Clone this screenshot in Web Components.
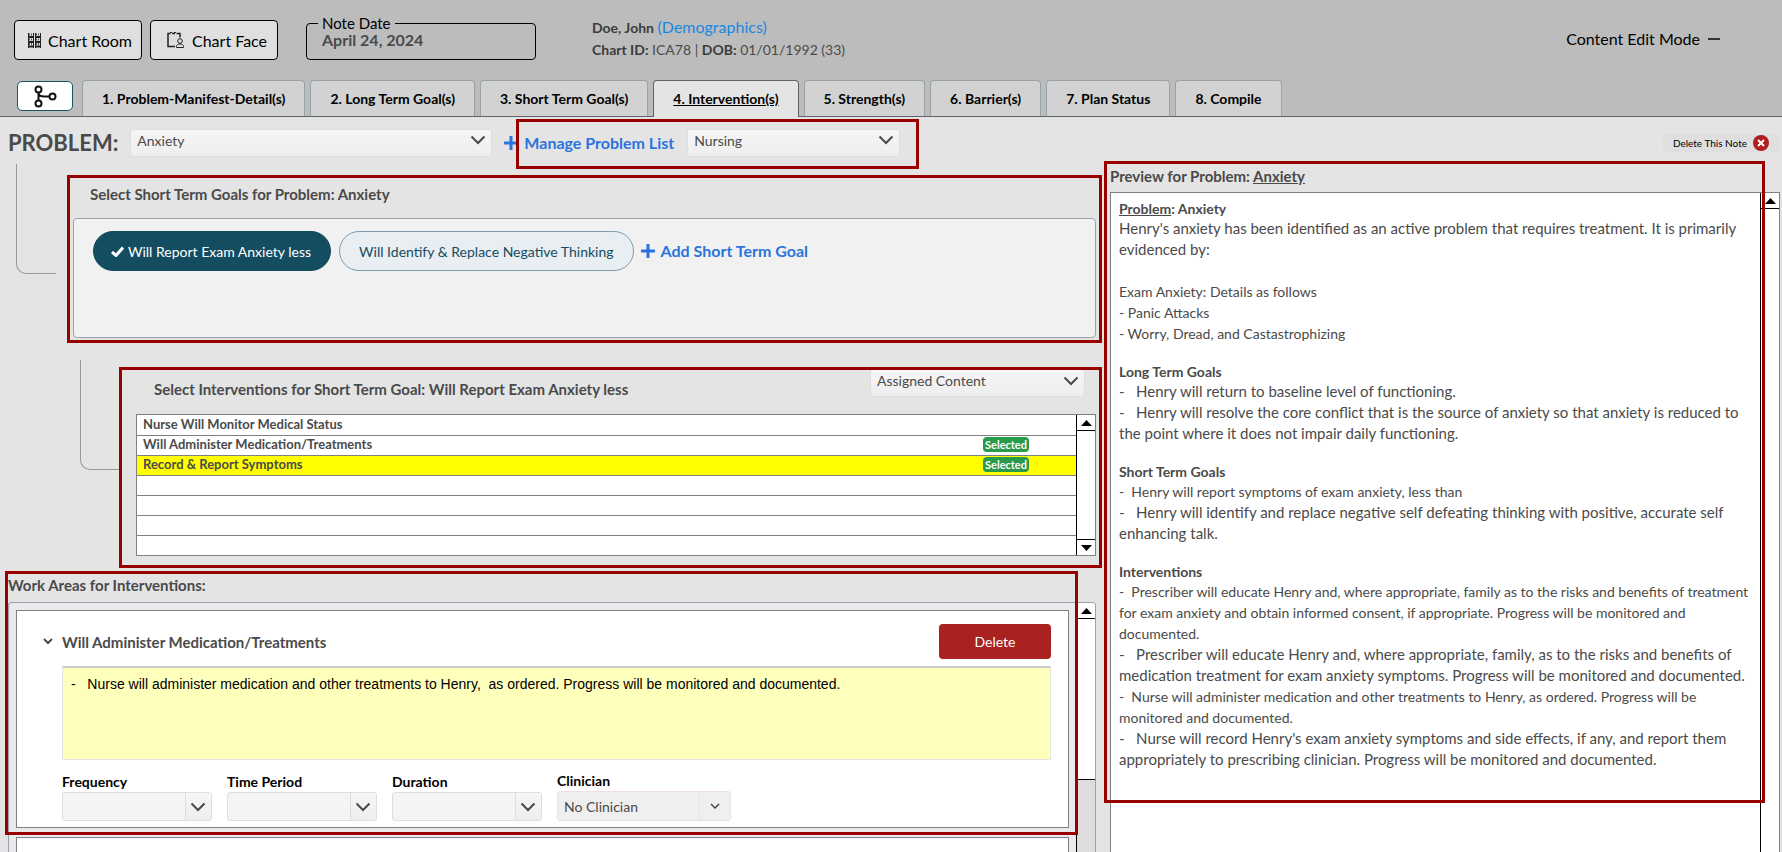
<!DOCTYPE html>
<html lang="en">
<head>
<meta charset="utf-8">
<title>Treatment Plan - Interventions</title>
<style>
    body {
        margin: 0;
        font-family: Lato, "Open Sans", sans-serif;
        font-size: 15px;
        color: #4a4a4a;
        background: #e4e4e4;
    }
</style>
</head>
<body>
<plan-page></plan-page>

<script>
const TABS = [
    "1. Problem-Manifest-Detail(s)",
    "2. Long Term Goal(s)",
    "3. Short Term Goal(s)",
    "4. Intervention(s)",
    "5. Strength(s)",
    "6. Barrier(s)",
    "7. Plan Status",
    "8. Compile",
];

const INTERVENTIONS = [
    { name: "Nurse Will Monitor Medical Status" },
    { name: "Will Administer Medication/Treatments", selected: true },
    { name: "Record & Report Symptoms", selected: true, current: true },
    {}, {}, {}, {},
];

const BASE = `
    *, *::before, *::after { box-sizing: border-box; }
    button, select, textarea { font: inherit; color: inherit; margin: 0; }
    h1, h2, h3, p { margin: 0; }
`;

function define(name, render) {
    customElements.define(name, class extends HTMLElement {
        connectedCallback() {
            if (this.shadowRoot) return;
            const shadow = this.attachShadow({ mode: "open" });
            shadow.innerHTML = render(this);
        }
    });
}

// red frame drawn over whatever it wraps
define("mark-frame", () => `<style>
    ${BASE}
    :host { display: block; position: relative; }
    .frame {
        position: absolute;
        inset: var(--frame-inset, 0);
        border: 3px solid #990000;
        pointer-events: none;
        z-index: 2;
    }
</style>
<slot></slot><div class="frame"></div>`);

define("select-field", (el) => {
    const label = el.getAttribute("label");
    const hidden = el.hasAttribute("bare");
    const value = el.getAttribute("value") || "";
    return `<style>
        ${BASE}
        :host { display: block; font-size: 14px; }
        label { display: block; height: 20px; line-height: 20px; font-weight: bold; color: #000; }
        .box {
            display: grid;
            grid-template-columns: 1fr 26px;
            height: 28px;
            border: 1px solid #dedede;
            border-radius: 3px;
            background: linear-gradient(#f6f6f6, #eeeeee);
        }
        select {
            grid-area: 1 / 1 / 2 / 3;
            appearance: none;
            border: 0;
            padding: 0 30px 0 6px;
            background: none;
            width: 100%;
            min-width: 0;
        }
        svg {
            grid-area: 1 / 2;
            place-self: center;
            pointer-events: none;
            fill: none;
            stroke: #4a4a4a;
            stroke-width: 2;
        }
        :host([split]) .box { height: 29px; background: #f4f4f4; }
        :host([split]) .line {
            grid-area: 1 / 2;
            border-left: 1px solid #dedede;
            background: linear-gradient(#f6f6f6, #eeeeee);
        }
        :host([off]) .box { height: 30px; background: #efefef; border-color: #f0dfdf; grid-template-columns: 1fr 31px; }
        :host([off]) .line { background: none; border-color: #f0dfdf; }
    </style>
    ${hidden ? "" : `<label for="s">${label}</label>`}
    <div class="box">
        <span class="line"></span>
        <select id="s"${hidden ? ` aria-label="${label}"` : ""}><option>${value}</option></select>
        ${el.hasAttribute("off")
            ? `<svg width="10" height="6" viewBox="0 0 10 6"><path style="stroke-width:1.5" d="M1 1l4 4 4-4"/></svg>`
            : `<svg width="16" height="10" viewBox="0 0 16 10"><path d="M1.500 1.500L8 8l6.500-6.500"/></svg>`}
    </div>`;
});

define("scroll-rail", () => `<style>
    ${BASE}
    :host {
        display: flex;
        flex-direction: column;
        flex: none;
        box-sizing: border-box;
        width: 19px;
        border-left: 1px solid #000;
        background: #ddd;
    }
    span { display: grid; place-items: center; height: 16px; background: #fff; flex: none; }
    .up { border-bottom: 1px solid #000; }
    .down { border-top: 1px solid #000; }
    .thumb { flex: 1; background: #fff; }
    :host([partial]) .thumb { flex: none; height: 161px; border-bottom: 1px solid #000; }
    :host([partial]) .down { display: none; }
    :host([endless]) .down { display: none; }
    svg { fill: #000; }
</style>
<span class="up"><svg width="11" height="6"><path d="M5.500 0L11 6H0z"/></svg></span>
<div class="thumb"></div>
<span class="down"><svg width="11" height="6"><path d="M0 0h11L5.500 6z"/></svg></span>`);

define("add-link", () => `<style>
    ${BASE}
    :host { display: inline-flex; }
    a {
        display: inline-flex;
        align-items: center;
        gap: 6px;
        color: #2b74dd;
        font-size: 16px;
        line-height: 20px;
        font-weight: bold;
        text-decoration: none;
        white-space: nowrap;
    }
    svg { fill: #2b74dd; flex: none; }
</style>
<a href="#"><svg width="14" height="14"><path d="M5.500 0h3v5.500H14v3H8.500V14h-3V8.500H0v-3h5.500z"/></svg><slot></slot></a>`);

define("goal-chip", (el) => `<style>
    ${BASE}
    :host { display: block; font-size: 14px; }
    button {
        display: flex;
        align-items: center;
        gap: 4px;
        height: 40px;
        padding: 0 19px;
        border: 1px solid #7c9eae;
        border-radius: 20px;
        background: #e9eef2;
        color: #144c60;
        white-space: nowrap;
    }
    :host([picked]) button { background: #144c60; border-color: #144c60; color: #fff; padding: 0 19px 0 17px; }
</style>
<button type="button" aria-pressed="${el.hasAttribute("picked")}">
    ${el.hasAttribute("picked") ? `<svg width="13" height="11" viewBox="0 0 13 11"><path d="M1 6l4 3.500L12 1.500" fill="none" stroke="#fff" stroke-width="3"/></svg>` : ""}
    <slot></slot>
</button>`);

define("app-header", () => `<style>
    ${BASE}
    :host { display: block; height: 80px; background: #bcbcbc; }
    .bar { display: flex; align-items: flex-start; padding: 20px 62px 0 14px; }
    .nav {
        display: flex;
        align-items: center;
        gap: 7px;
        width: 128px;
        height: 40px;
        margin-right: 8px;
        padding: 0 0 0 13px;
        border: 1px solid #000;
        border-radius: 4px;
        background: #dfdfdf;
        color: #000;
        font-size: 16px;
        white-space: nowrap;
    }
    .face { padding-left: 16px; }
    fieldset {
        width: 230px;
        height: 46px;
        margin: -6px 56px 0 20px;
        padding: 0 15px;
        border: 1px solid #000;
        border-radius: 4px;
    }
    legend { padding: 0 4px; margin-left: -4px; font-size: 15px; line-height: 18px; color: #000; }
    fieldset b { display: block; font-size: 16px; line-height: 16px; }
    .who { font-size: 14px; line-height: 22px; margin-top: -4px; white-space: nowrap; }
    .who b { color: #3c3c3c; }
    .who a { color: #1a87e0; font-size: 16px; text-decoration: none; }
    .mode {
        display: flex;
        align-items: center;
        gap: 8px;
        margin-left: auto;
        padding: 0;
        border: 0;
        background: none;
        height: 37px;
        color: #000;
        font-size: 16px;
        white-space: nowrap;
    }
    .mode i { width: 12px; height: 2px; background: #333; }
</style>
<header class="bar">
    <button class="nav" type="button">
        <svg width="13" height="15" viewBox="0 0 13 15" fill="none" stroke="#222">
            <path d="M.5 0v15M5.500 0v15M7.500 0v15M12.500 0v15"/>
            <path stroke-width="2" d="M1 4h4M1 9h4M1 13.500h4M8 4h4M8 9h4M8 13.500h4"/>
            <path stroke="#555" stroke-dasharray="1 1" stroke-width="2" d="M1 1.500h4M1 6.500h4M1 11h4M8 1.500h4M8 6.500h4M8 11h4"/>
        </svg>
        Chart Room
    </button>
    <button class="nav face" type="button">
        <svg width="18" height="17" viewBox="0 0 18 17" fill="none" stroke="#222">
            <path stroke-width="1.500" d="M8 14.500H1V1.500h2.500M5 1.500h3M9.500 1.500H13v4"/>
            <path d="M3 .5h2M7 .5h2"/>
            <circle cx="13" cy="9" r="2.300"/>
            <path d="M9.500 15.500v-1c0-1.500 1.500-2.500 3.500-2.500s3.500 1 3.500 2.500v1z"/>
        </svg>
        Chart Face
    </button>
    <fieldset><legend>Note Date</legend><b>April 24, 2024</b></fieldset>
    <div class="who">
        <div><b>Doe, John</b> <a href="#">(Demographics)</a></div>
        <div><b>Chart ID:</b> ICA78 | <b>DOB:</b> 01/01/1992 (33)</div>
    </div>
    <button class="mode" type="button">Content Edit Mode <i></i></button>
</header>`);

define("step-tabs", () => `<style>
    ${BASE}
    :host { display: block; font-size: 14px; background: #bcbcbc; }
    nav {
        display: flex;
        gap: 5px;
        height: 37px;
        padding-left: 17px;
        border-bottom: 1px solid #5e6468;
    }
    .tree {
        width: 56px;
        height: 30px;
        margin: 1px 4px 0 0;
        padding: 0;
        border: 1px solid #1c5266;
        border-radius: 5px;
        background: #fff;
        display: grid;
        place-items: center;
    }
    a {
        height: 36px;
        padding: 0 19px;
        line-height: 36px;
        border: 1px solid #98a2a9;
        border-bottom: 0;
        border-radius: 4px 4px 0 0;
        background: #d2d2d2;
        color: #000;
        font-weight: bold;
        text-decoration: none;
        white-space: nowrap;
    }
    a[aria-current] {
        height: 37px;
        border-color: #5e6468;
        background: #e4e4e4;
        text-decoration: underline;
    }
</style>
<nav>
    <button class="tree" type="button" aria-label="Plan tree">
        <svg width="23" height="23" viewBox="0 0 23 23" fill="none" stroke="#111" stroke-width="2"><circle cx="4.500" cy="4.500" r="3"/><circle cx="4.500" cy="18.500" r="3"/><circle cx="18.500" cy="11.500" r="3"/><path d="M4.500 7.500v8M4.500 8c0 2.500 3 3.500 6 3.500h5"/></svg>
    </button>
    ${TABS.map((tab, i) => `<a href="#"${i === 3 ? ` aria-current="page"` : ""}>${tab}</a>`).join("")}
</nav>`);

define("problem-bar", () => `<style>
    ${BASE}
    :host { display: flex; align-items: center; height: 51px; padding: 0 2px 0 8px; }
    h1 { font-size: 22px; line-height: 30px; margin-right: 12px; }
    .problem { width: 362px; margin-right: 12px; }
    .list { --frame-inset: -10px -19px -12px 12px; }
    .role { width: 213px; margin-left: 13px; }
    .del {
        display: flex;
        align-items: center;
        gap: 6px;
        height: 18px;
        margin-left: auto;
        padding: 0 11px 0 10px;
        border: 0;
        border-radius: 4px;
        background: #dfdfdf;
        color: #000;
        font-size: 10px;
        white-space: nowrap;
    }
    .tools { display: flex; align-items: center; }
</style>
<h1>PROBLEM:</h1>
<select-field class="problem" bare label="Problem" value="Anxiety"></select-field>
<mark-frame class="list">
    <div class="tools">
        <add-link>Manage Problem List</add-link>
        <select-field class="role" bare label="Role" value="Nursing"></select-field>
    </div>
</mark-frame>
<button class="del" type="button">Delete This Note
    <svg width="16" height="16" viewBox="0 0 16 16"><circle cx="8" cy="8" r="8" fill="#b01e1e"/><path d="M5 5l6 6M11 5l-6 6" stroke="#fff" stroke-width="2"/></svg>
</button>`);

define("goal-picker", () => `<style>
    ${BASE}
    :host { display: block; }
    h2 { padding-left: 17px; font-size: 15px; line-height: 20px; }
    .panel {
        display: flex;
        align-items: flex-start;
        gap: 8px;
        height: 120px;
        margin-top: 14px;
        padding: 12px 19px;
        border: 1px solid #98a2ab;
        border-radius: 4px;
        background: #f1f1f1;
    }
    add-link { margin: 10px 0 0 -1px; }
</style>
<h2>Select Short Term Goals for Problem: Anxiety</h2>
<div class="panel">
    <goal-chip picked>Will Report Exam Anxiety less</goal-chip>
    <goal-chip>Will Identify &amp; Replace Negative Thinking</goal-chip>
    <add-link>Add Short Term Goal</add-link>
</div>`);

define("intervention-list", () => `<style>
    ${BASE}
    :host { display: block; }
    .top { display: flex; align-items: flex-start; justify-content: space-between; padding: 0 11px 0 18px; height: 45px; }
    h2 { font-size: 15px; line-height: 40px; }
    select-field { width: 215px; }
    .grid { display: flex; border: 1px solid #808080; background: #fff; }
    table { flex: 1; border-collapse: collapse; font-size: 13px; font-weight: bold; }
    td { height: 20px; padding: 0 0 1px; line-height: 17px; border-bottom: 1px solid #808080; }
    td:first-child { padding-left: 6px; }
    td:last-child { width: 93px; }
    tr:last-child td { border-bottom: 0; }
    .current { background: #ffff00; }
    .badge {
        display: block;
        width: 46px;
        height: 15px;
        border-radius: 4px;
        background: #279a4b;
        color: #fff;
        font-size: 11px;
        line-height: 15px;
        text-align: center;
    }
</style>
<div class="top">
    <h2>Select Interventions for Short Term Goal: Will Report Exam Anxiety less</h2>
    <select-field bare label="Content" value="Assigned Content"></select-field>
</div>
<div class="grid">
    <table>
        ${INTERVENTIONS.map((row) => `<tr${row.current ? ` class="current"` : ""}>
            <td>${row.name ? row.name.replace("&", "&amp;") : ""}</td>
            <td>${row.selected ? `<span class="badge">Selected</span>` : ""}</td>
        </tr>`).join("")}
    </table>
    <scroll-rail></scroll-rail>
</div>`);

define("work-card", () => `<style>
    ${BASE}
    :host { display: block; padding: 13px 17px 6px 25px; border: 1px solid #808080; background: #fff; }
    .head { display: flex; align-items: center; height: 35px; gap: 8px; }
    h3 { font-size: 15px; line-height: 20px; flex: 1; }
    .del { width: 112px; height: 35px; border: 0; border-radius: 4px; background: #a9221f; color: #fff; font-size: 14px; }
    .body { margin-left: 20px; }
    textarea {
        display: block;
        width: 100%;
        height: 94px;
        margin: 7px 0 11px;
        padding: 6px 8px;
        border: 1px solid #e4e4e4;
        border-top: 2px solid #ccc;
        background: #ffffbc;
        color: #000;
        font: 14px/20px "Liberation Sans", Arial, sans-serif;
        resize: none;
    }
    .fields { display: flex; align-items: flex-end; gap: 15px; }
    select-field { width: 150px; }
    select-field[off] { width: 174px; }
    .toggle { display: flex; width: 12px; height: 12px; padding: 0; border: 0; background: none; align-items: center; justify-content: center; }
</style>
<div class="head">
    <button class="toggle" type="button" aria-label="Collapse"><svg width="10" height="7" viewBox="0 0 10 7"><path d="M1 1l4 4 4-4" fill="none" stroke="#4a4a4a" stroke-width="2"/></svg></button>
    <h3>Will Administer Medication/Treatments</h3>
    <button class="del" type="button">Delete</button>
</div>
<div class="body">
    <textarea aria-label="Intervention text">-   Nurse will administer medication and other treatments to Henry,  as ordered. Progress will be monitored and documented.</textarea>
    <div class="fields">
        <select-field split label="Frequency"></select-field>
        <select-field split label="Time Period"></select-field>
        <select-field split label="Duration"></select-field>
        <select-field split off label="Clinician" value="No Clinician"></select-field>
    </div>
</div>`);

define("work-areas", () => `<style>
    ${BASE}
    :host { display: flex; flex-direction: column; flex: 1; min-height: 0; }
    h2 { font-size: 15px; line-height: 20px; margin-bottom: 7px; }
    .panel {
        display: flex;
        flex: 1;
        min-height: 0;
        border: 1px solid #98a2ab;
        border-bottom: 0;
        border-radius: 4px 4px 0 0;
        background: #ece9ec;
        overflow: hidden;
    }
    .cards { flex: 1; padding: 7px 7px 0 7px; }
    .next { height: 60px; margin-top: 9px; border: 1px solid #808080; background: #fff; }
</style>
<h2>Work Areas for Interventions:</h2>
<div class="panel">
    <div class="cards">
        <work-card></work-card>
        <div class="next"></div>
    </div>
    <scroll-rail partial></scroll-rail>
</div>`);

define("note-preview", () => `<style>
    ${BASE}
    :host { display: flex; flex-direction: column; min-height: 0; }
    h2 { font-size: 15px; line-height: 17px; margin-bottom: 7px; }
    .pane {
        display: flex;
        flex: 1;
        min-height: 0;
        overflow: hidden;
        border: 1px solid #808080;
        border-bottom: 0;
        background: #fff;
    }
    .text { flex: 1; padding: 6px 4px 6px 8px; font-size: 14px; line-height: 21px; }
    h3 { font-size: 14px; line-height: 19px; }
    p + h3 { margin-top: 18px; }
    p { white-space: pre-wrap; }
    .wide { font-size: 15px; }
    .gap { margin-top: 21px; }
</style>
<h2>Preview for Problem: <u>Anxiety</u></h2>
<div class="pane">
    <div class="text">
        <h3><u>Problem</u>: Anxiety</h3>
        <p class="wide">Henry's anxiety has been identified as an active problem that requires treatment. It is primarily evidenced by:</p>
        <p class="gap">Exam Anxiety: Details as follows</p>
        <p>- Panic Attacks</p>
        <p>- Worry, Dread, and Castastrophizing</p>
        <h3>Long Term Goals</h3>
        <p class="wide">-   Henry will return to baseline level of functioning.</p>
        <p class="wide">-   Henry will resolve the core conflict that is the source of anxiety so that anxiety is reduced to the point where it does not impair daily functioning.</p>
        <h3>Short Term Goals</h3>
        <p>-  Henry will report symptoms of exam anxiety, less than</p>
        <p class="wide">-   Henry will identify and replace negative self defeating thinking with positive, accurate self enhancing talk.</p>
        <h3>Interventions</h3>
        <p>-  Prescriber will educate Henry and, where appropriate, family as to the risks and benefits of treatment for exam anxiety and obtain informed consent, if appropriate. Progress will be monitored and documented.</p>
        <p class="wide">-   Prescriber will educate Henry and, where appropriate, family, as to the risks and benefits of medication treatment for exam anxiety symptoms. Progress will be monitored and documented.</p>
        <p>-  Nurse will administer medication and other treatments to Henry, as ordered. Progress will be monitored and documented.</p>
        <p class="wide">-   Nurse will record Henry's exam anxiety symptoms and side effects, if any, and report them appropriately to prescribing clinician. Progress will be monitored and documented.</p>
    </div>
    <scroll-rail endless></scroll-rail>
</div>`);

define("plan-page", () => `<style>
    ${BASE}
    :host { display: flex; flex-direction: column; height: 100vh; overflow: hidden; }
    main {
        display: grid;
        grid-template-columns: minmax(0, 1088fr) minmax(0, 670fr);
        gap: 14px;
        flex: 1;
        min-height: 0;
        padding: 0 2px 0 8px;
    }
    .left { display: flex; flex-direction: column; min-height: 0; }
    .goals { display: flex; padding-top: 16px; }
    .goals mark-frame { flex: 1; --frame-inset: -9px -6px -5px -6px; }
    .branch {
        flex: none;
        width: 40px;
        height: 110px;
        border: solid #999;
        border-width: 0 0 1px 1px;
        border-bottom-left-radius: 10px;
    }
    .goals .branch { margin: -20px 17px 0 8px; }
    .steps { display: flex; padding: 31px 0 19px; }
    .steps .branch { margin: -9px 16px 0 72px; }
    .steps mark-frame { flex: 1; --frame-inset: -2px -6px -12px -17px; }
    .work { display: flex; flex-direction: column; flex: 1; min-height: 0; --frame-inset: -4px 18px 17px -3px; }
    .preview { display: flex; flex-direction: column; min-height: 0; --frame-inset: -7px 15px 49px -6px; }
    note-preview { flex: 1; }
</style>
<app-header></app-header>
<step-tabs></step-tabs>
<problem-bar></problem-bar>
<main>
    <div class="left">
        <section class="goals">
            <div class="branch"></div>
            <mark-frame><goal-picker></goal-picker></mark-frame>
        </section>
        <section class="steps">
            <div class="branch"></div>
            <mark-frame><intervention-list></intervention-list></mark-frame>
        </section>
        <mark-frame class="work"><work-areas></work-areas></mark-frame>
    </div>
    <mark-frame class="preview"><note-preview></note-preview></mark-frame>
</main>`);
</script>
</body>
</html>
